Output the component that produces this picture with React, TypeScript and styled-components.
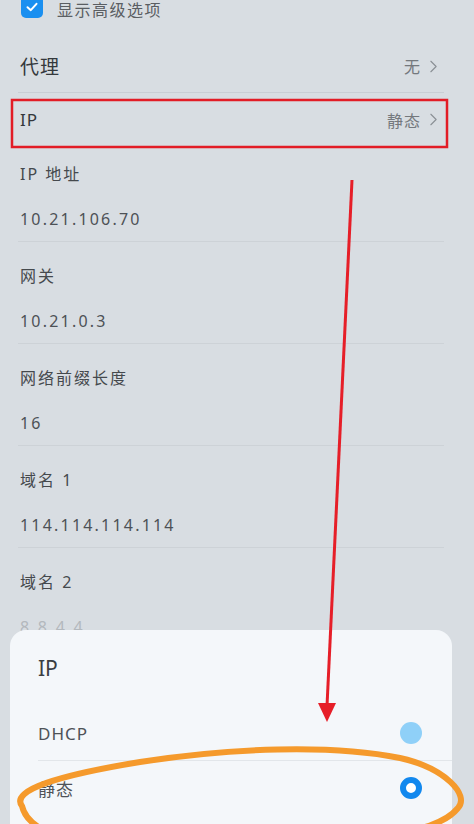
import styled, { createGlobalStyle } from "styled-components";
import { ChevronRight } from "lucide-react";

const GlobalStyle = createGlobalStyle`
  html, body {
    margin: 0;
    padding: 0;
    background: #d8dde2;
  }
  body {
    font-family: "Noto Sans", "Noto Sans CJK SC", sans-serif;
  }
`;

const Page = styled.div`
  position: relative;
  width: 474px;
  height: 824px;
  overflow: hidden;
  background: #d8dde2;
`;

const List = styled.div`
  display: flex;
  flex-direction: column;
  padding: 0 30px 0 18px;
`;

const CheckRow = styled.div`
  display: flex;
  align-items: flex-start;
  gap: 14px;
  height: 40px;
  padding-left: 3px;
`;

const CheckBox = styled.div`
  width: 22px;
  height: 22px;
  margin-top: -4px;
  border-radius: 5px;
  background: #1a8ff0;
  display: flex;
  align-items: center;
  justify-content: center;
`;

const CheckText = styled.span`
  font-size: 16px;
  line-height: 20px;
  color: #5a5e63;
  letter-spacing: 1.5px;
`;

const NavRow = styled.div<{ $divider?: boolean; $height: number; $top?: number }>`
  display: flex;
  align-items: center;
  justify-content: space-between;
  height: ${(p) => p.$height}px;
  padding-top: ${(p) => p.$top ?? 0}px;
  border-bottom: ${(p) => (p.$divider ? "1px solid #c9ced4" : "none")};
  padding-left: 2px;
`;

const NavTitle = styled.span<{ $size: number }>`
  font-size: ${(p) => p.$size}px;
  color: #34383c;
  letter-spacing: 1px;
`;

const NavValue = styled.span`
  display: flex;
  align-items: center;
  gap: 2px;
  font-size: 16px;
  color: #74787d;
  letter-spacing: 1px;
`;

const Field = styled.div`
  display: flex;
  flex-direction: column;
  height: 101px;
  border-bottom: 1px solid #cdd2d7;
  padding-left: 2px;
`;

const FieldLabel = styled.span`
  margin-top: 21px;
  height: 26px;
  line-height: 26px;
  font-size: 16px;
  color: #45494d;
  letter-spacing: 2px;
`;

const FieldValue = styled.span<{ $faded?: boolean }>`
  margin-top: 19px;
  height: 26px;
  line-height: 26px;
  font-size: 16px;
  color: ${(p) => (p.$faded ? "#b3b8bd" : "#4d5156")};
  letter-spacing: 2.2px;
`;

const Sheet = styled.div`
  position: absolute;
  left: 10px;
  width: 442px;
  top: 630px;
  height: 230px;
  background: #f4f7fa;
  border-radius: 16px;
  padding-left: 28px;
  box-sizing: border-box;
`;

const SheetTitle = styled.div`
  height: 76px;
  display: flex;
  align-items: center;
  font-size: 21px;
  color: #3a3e42;
`;

const Option = styled.div<{ $divider?: boolean }>`
  display: flex;
  align-items: center;
  justify-content: space-between;
  height: 54px;
  padding-right: 30px;
  border-bottom: ${(p) => (p.$divider ? "1px solid #e2e6ea" : "none")};
`;

const OptionText = styled.span`
  font-size: 17px;
  color: #4e5257;
  letter-spacing: 1px;
`;

const Radio = styled.div<{ $checked?: boolean }>`
  width: 22px;
  height: 22px;
  border-radius: 50%;
  box-sizing: border-box;
  background: ${(p) => (p.$checked ? "#ffffff" : "#8fd0f8")};
  border: ${(p) => (p.$checked ? "6px solid #1288ee" : "none")};
`;

const Annotations = styled.svg`
  position: absolute;
  left: 0;
  top: 0;
  width: 474px;
  height: 824px;
  pointer-events: none;
`;

const fields = [
  { label: "IP 地址", value: "10.21.106.70" },
  { label: "网关", value: "10.21.0.3" },
  { label: "网络前缀长度", value: "16" },
  { label: "域名 1", value: "114.114.114.114" },
  { label: "域名 2", value: "8.8.4.4", faded: true },
];

export default function App() {
  return (
    <Page>
      <GlobalStyle />
      <List>
        <CheckRow>
          <CheckBox>
            <svg width="14" height="14" viewBox="0 0 14 14">
              <path d="M2.5 7.2 L5.8 10.2 L11.5 3.8" fill="none" stroke="#fff" strokeWidth="2" strokeLinecap="round" strokeLinejoin="round" />
            </svg>
          </CheckBox>
          <CheckText>显示高级选项</CheckText>
        </CheckRow>
        <NavRow $divider $height={52}>
          <NavTitle $size={19}>代理</NavTitle>
          <NavValue>
            无
            <ChevronRight size={21} strokeWidth={1.3} color="#8a8f95" />
          </NavValue>
        </NavRow>
        <NavRow $height={41} $top={6}>
          <NavTitle $size={17}>IP</NavTitle>
          <NavValue>
            静态
            <ChevronRight size={21} strokeWidth={1.3} color="#8a8f95" />
          </NavValue>
        </NavRow>
        {fields.map((f) => (
          <Field key={f.label}>
            <FieldLabel>{f.label}</FieldLabel>
            <FieldValue $faded={f.faded}>{f.value}</FieldValue>
          </Field>
        ))}
      </List>
      <Sheet>
        <SheetTitle>IP</SheetTitle>
        <Option $divider>
          <OptionText>DHCP</OptionText>
          <Radio />
        </Option>
        <Option>
          <OptionText>静态</OptionText>
          <Radio $checked />
        </Option>
      </Sheet>
      <Annotations viewBox="0 0 474 824">
        <rect x="12" y="100" width="435" height="47" fill="none" stroke="#e21c26" strokeWidth="2.5" />
        <line x1="352" y1="180" x2="327" y2="706" stroke="#e61e28" strokeWidth="3" />
        <polygon points="318,703 336,703 327,722" fill="#e61e28" />
        <path
          d="M 22 806 C 10 790, 60 775, 140 762 C 230 748, 330 744, 400 758 C 445 768, 470 795, 458 808 C 445 824, 420 830, 380 836 M 22 806 C 24 815, 30 822, 40 828"
          fill="none"
          stroke="#f59a2c"
          strokeWidth="6"
          strokeLinecap="round"
        />
      </Annotations>
    </Page>
  );
}
